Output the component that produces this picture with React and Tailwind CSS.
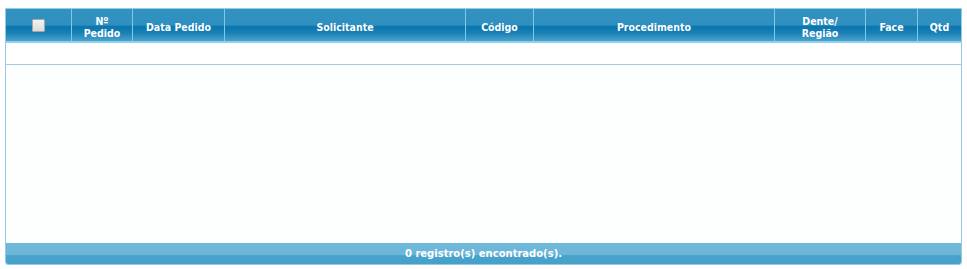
import React from "react";

const columns = [
  { label: "check", width: "w-[66px]" },
  { label: ["Nº", "Pedido"], width: "w-[61px]" },
  { label: "Data Pedido", width: "w-[92px]" },
  { label: "Solicitante", width: "w-[241px]" },
  { label: "Código", width: "w-[68px]" },
  { label: "Procedimento", width: "w-[241px]" },
  { label: ["Dente/", "Região"], width: "w-[91px]" },
  { label: "Face", width: "w-[52px]" },
  { label: "Qtd", width: "flex-1" },
];

const App = () => {
  return (
    <div className="min-h-[269px] bg-white pl-[5px] pt-[8px] font-['DejaVu_Sans_Condensed','DejaVu_Sans',Verdana,sans-serif]">
      <div className="w-[957px] h-[257px] flex flex-col border border-[#98c8e6] rounded-b-[3px] bg-[#fdfefe] overflow-hidden">
        {/* header */}
        <div className="flex h-[34px] border-b-2 border-[#8ed0ee] bg-[linear-gradient(to_bottom,#3292c2_0%,#2f8fbf_50%,#0a76ae_55%,#1a80b6_75%,#4aa2cc_100%)]">
          {columns.map((col, i) => (
            <div
              key={i}
              className={`${col.width} flex flex-col items-center justify-center pt-[3px] text-white text-[10.5px] font-bold leading-[12px] text-center ${
                i < columns.length - 1 ? "border-r border-[#7ec8ea]" : ""
              }`}>
              {col.label === "check" ? (
                <span className="block -mt-[3px] w-[13px] h-[13px] border border-[#a6a6a6] bg-[linear-gradient(to_bottom,#f2f2f2,#dcdcdc)] rounded-[1px]"></span>
              ) : Array.isArray(col.label) ? (
                col.label.map((l) => <span key={l}>{l}</span>)
              ) : (
                <span>{col.label}</span>
              )}
            </div>
          ))}
        </div>

        {/* empty row */}
        <div className="h-[22px] border-b border-[#a3cbe6] bg-white"></div>

        <div className="flex-1"></div>

        {/* footer */}
        <div className="h-[21px] flex items-center justify-center bg-[linear-gradient(to_bottom,#6fb8da_0%,#6cb6d8_55%,#48a3cc_60%,#45a0ca_100%)] font-['DejaVu_Sans',Verdana,sans-serif] text-white text-[10px] font-bold">
          0 registro(s) encontrado(s).
        </div>
      </div>
    </div>
  );
};

export default App;
